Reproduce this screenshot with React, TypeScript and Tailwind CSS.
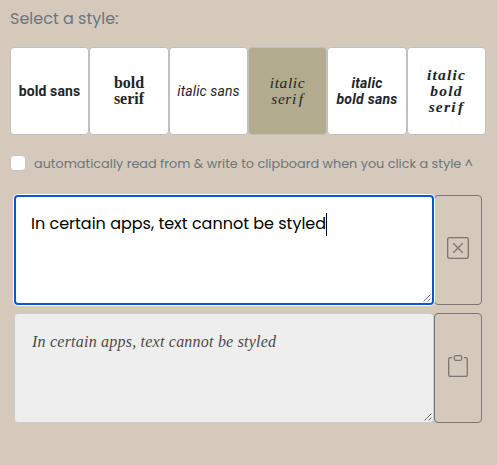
import React from "react";

const poppins = "font-['Poppins','Inter',sans-serif]";
const serif = "font-['Liberation_Serif',serif]";
const sans = "font-['Roboto',sans-serif]";

const styles = [
  { lines: ["bold sans"], face: `${sans} font-bold text-[14px] tracking-[0.1px]`, width: "w-[79px]", bg: "bg-white" },
  { lines: ["bold", "serif"], face: `${serif} font-bold text-[16px]`, width: "w-[80px]", bg: "bg-white" },
  { lines: ["italic sans"], face: `${sans} italic text-[14px] tracking-[0.1px]`, width: "w-[79px]", bg: "bg-white" },
  { lines: ["italic", "serif"], face: `${serif} italic text-[15.5px] tracking-[0.6px]`, width: "w-[79px]", bg: "bg-[#b2ab8e]", gap: true },
  { lines: ["italic", "bold sans"], face: `${sans} font-bold italic text-[14px] tracking-[0.25px]`, width: "w-[80px]", bg: "bg-white" },
  { lines: ["italic", "bold", "serif"], face: `${serif} font-bold italic text-[15.5px] tracking-[1.2px]`, width: "w-[79px]", bg: "bg-white", gap: true },
];

function Grip() {
  return (
    <svg className="absolute right-[1px] bottom-[1px]" width="8" height="8" viewBox="0 0 8 8" stroke="#444" strokeWidth="0.8">
      <path d="M.5 7.5 7.5.5M4.5 7.5 7.5 4.5" />
    </svg>
  );
}

function ClearIcon() {
  return (
    <svg width="22" height="22" viewBox="0 0 22 22" fill="none" stroke="#7b7672" strokeWidth="1.3">
      <rect x=".65" y=".65" width="20.7" height="20.7" rx="2" />
      <path d="m6.3 6.3 9.4 9.4m0-9.4-9.4 9.4" />
    </svg>
  );
}

function ClipboardIcon() {
  return (
    <svg width="20" height="22" viewBox="0 0 20 22" fill="none" stroke="#7b7672" strokeWidth="1.3">
      <path d="M4 2.6H2.6Q.7 2.6.7 4.5v14.9q0 1.9 1.9 1.9h14.8q1.9 0 1.9-1.9V4.5q0-1.9-1.9-1.9H16" />
      <rect x="6.2" y=".7" width="7.6" height="4.6" rx="1.5" />
    </svg>
  );
}

export default function App() {
  return (
    <main className={`h-[465px] w-[497px] overflow-hidden bg-[#d5c9bb] ${poppins}`}>
      <h1 className="ml-[10px] h-[47px] pt-[7px] text-[16px] leading-6 font-normal text-[#6c757d] whitespace-nowrap">
        Select a style:
      </h1>
      <div className="ml-[10px] flex h-[88px] w-[476px]">
        {styles.map((s) => (
          <button key={s.lines.join(" ")} className={`flex shrink-0 flex-col items-center justify-center rounded-[4px] border border-[#bfc0c2] leading-4 whitespace-nowrap text-[#212529] ${s.width} ${s.bg} ${s.face}`}>
            {s.lines.map((l) => (
              <span key={l}>{s.gap && l === "serif" ? <>ser<span className="tracking-[2.5px]">i</span>f</> : l}</span>
            ))}
          </button>
        ))}
      </div>
      <label className="ml-[10px] flex h-[56px] items-center gap-[8px] text-[12.8px] text-[#6c757d] whitespace-nowrap">
        <span className="size-4 rounded-[4px] border border-[#c6c5c4] bg-white" />
        <span className="pt-px">automatically read from &amp; write to clipboard when you click a style ^</span>
      </label>
      <div className="mt-[4px] ml-[14px] flex h-[110px]">
        <div className="relative w-[420px] rounded-[4px] border-2 border-[#0558cf] bg-white pt-[15px] pl-[15px] text-[16px] leading-6 text-black shadow-[0_0_0_1px_#fff]">
          <span className="flex items-center whitespace-nowrap">In certain apps, text cannot be styled<span className="h-[23px] w-px bg-black" /></span>
          <Grip />
        </div>
        <button className="flex w-[48px] items-center justify-center rounded-[4px] border border-[#7b7672] pb-[4px]"><ClearIcon /></button>
      </div>
      <div className="mt-[8px] ml-[14px] flex h-[110px]">
        <div className={`relative w-[420px] rounded-[4px] border border-[#c9cccf] bg-[#eee] pt-[16px] pl-[17px] text-[16px] leading-6 italic text-[#4a4a4a] whitespace-nowrap ${serif} tracking-[0.22px]`}>
          In certain apps, text cannot be styled
          <Grip />
        </div>
        <button className="flex w-[48px] items-center justify-center rounded-[4px] border border-[#7b7672] pb-[4px]"><ClipboardIcon /></button>
      </div>
    </main>
  );
}
